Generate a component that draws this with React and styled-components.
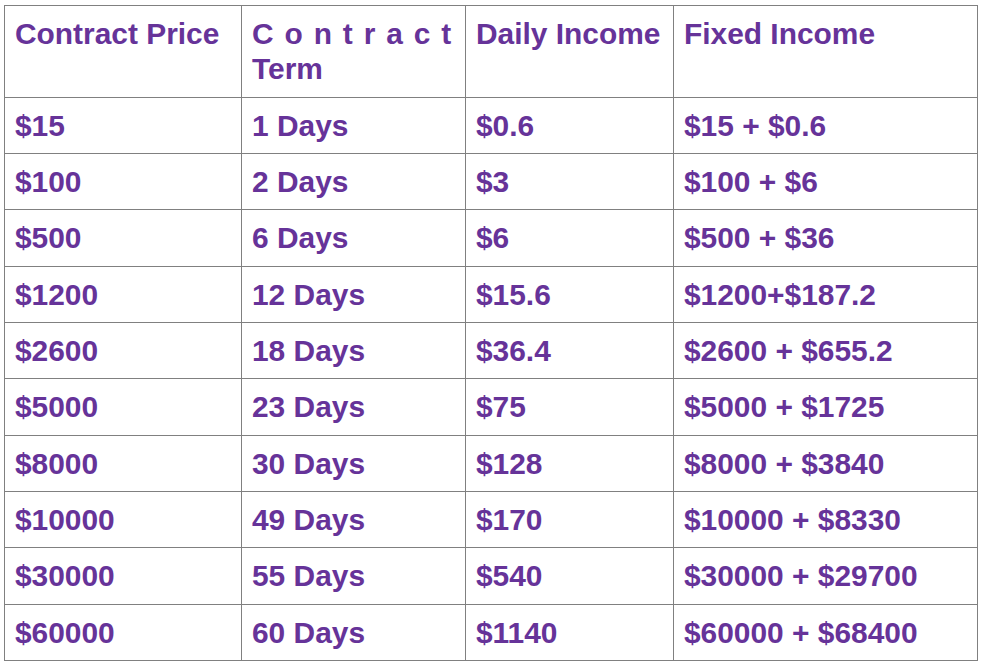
import React from "react";
import styled, { createGlobalStyle } from "styled-components";

const Global = createGlobalStyle`
  html, body { margin: 0; padding: 0; background: #ffffff; }
  body { font-family: "Liberation Sans", Arial, Helvetica, sans-serif; }
`;

const Page = styled.div`
  padding: 5px 0 0 4px;
`;

const Table = styled.div`
  display: grid;
  grid-template-columns: 236px 223px 207px 303px;
  gap: 1px;
  padding: 1px;
  width: max-content;
  background: #808080;
`;

const Cell = styled.div`
  background: #ffffff;
  color: #663399;
  font-family: "Liberation Sans", Arial, Helvetica, sans-serif;
  font-weight: 700;
  font-size: 29.9px;
  line-height: 35.35px;
  padding: 10px 10px 10px 10px;
  white-space: nowrap;
`;

const HeadCell = styled(Cell)`
  white-space: normal;
`;

const Spread = styled.span`
  display: block;
  letter-spacing: ${(p) => p.$spacing}px;
`;

const rows = [
  ["$15", "1 Days", "$0.6", "$15 + $0.6"],
  ["$100", "2 Days", "$3", "$100 + $6"],
  ["$500", "6 Days", "$6", "$500 + $36"],
  ["$1200", "12 Days", "$15.6", "$1200+$187.2"],
  ["$2600", "18 Days", "$36.4", "$2600 + $655.2"],
  ["$5000", "23 Days", "$75", "$5000 + $1725"],
  ["$8000", "30 Days", "$128", "$8000 + $3840"],
  ["$10000", "49 Days", "$170", "$10000 + $8330"],
  ["$30000", "55 Days", "$540", "$30000 + $29700"],
  ["$60000", "60 Days", "$1140", "$60000 + $68400"],
];

export default function App() {
  return (
    <>
      <Global />
      <Page>
        <Table>
          <HeadCell>Contract Price</HeadCell>
          <HeadCell>
            <Spread $spacing={10.9}>Contract</Spread>
            Term
          </HeadCell>
          <HeadCell>Daily Income</HeadCell>
          <HeadCell>Fixed Income</HeadCell>
          {rows.map((r, i) =>
            r.map((v, j) => <Cell key={`${i}-${j}`}>{v}</Cell>)
          )}
        </Table>
      </Page>
    </>
  );
}
